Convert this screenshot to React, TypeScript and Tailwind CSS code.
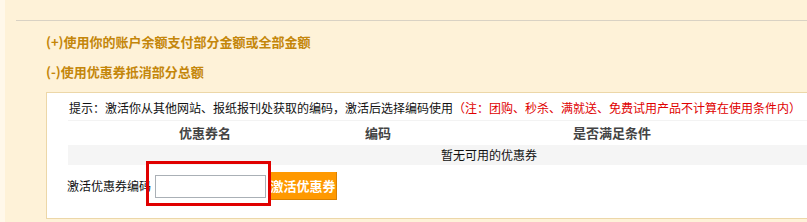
const font = "font-['SimSun','Noto_Sans_CJK_SC',sans-serif]";

const CouponPanel = () => {
  return (
    <div className="relative mt-[11px] ml-[30px] w-[880px] h-[127px] border border-[#ecd7a8] bg-white">
      <p className="absolute left-[22px] top-[7px] text-[12px] leading-[16px] text-[#111] whitespace-nowrap">
        提示：激活你从其他网站、报纸报刊处获取的编码，激活后选择编码使用
        <span className="text-[#e00000]">（注：团购、秒杀、满就送、免费试用产品不计算在使用条件内）</span>
      </p>
      <div className="absolute left-[21px] top-[27px] w-[742px] text-[12px]">
        <div className="flex h-[25px] items-center border-t border-[#f3f3f3] font-bold text-[13px] text-[#444]">
          <div className="w-[274px] text-center">优惠券名</div>
          <div className="w-[72px] text-center">编码</div>
          <div className="w-[396px] text-center">是否满足条件</div>
        </div>
        <div className="flex h-[20px] items-center bg-[#f5f5f5] pl-[373px] text-[#111]">暂无可用的优惠券</div>
      </div>
      <div className="absolute left-[20px] top-[79px] flex items-center text-[12px] text-[#111]">
        <span className="w-[88px] whitespace-nowrap">激活优惠券编码</span>
        <input
          type="text"
          className="w-[111px] h-[23px] border border-[#aab0b6] bg-white outline-none"
        />
        <button className="ml-[4px] h-[28px] w-[67px] bg-[#ff9900] border-r border-b border-[#d98000] text-white font-bold text-[13px] whitespace-nowrap">
          激活优惠券
        </button>
      </div>
      <div className="absolute left-[99px] top-[68px] w-[125px] h-[45px] border-[3px] border-[#e00000]" />
    </div>
  );
};

export default function App() {
  return (
    <div className={`flex w-[807px] h-[222px] overflow-hidden bg-[#fef2d8] ${font}`}>
      <div className="w-[5px] shrink-0 bg-[#fff8ea]" />
      <div className="flex-1 pt-[20px] pl-[11px]">
        <div className="border-t border-[#d9d2c4] w-[900px]" />
        <div className="pl-[30px] pt-[12px] font-bold text-[13px] leading-[18px] text-[#c4860a]">
          <div>(+)使用你的账户余额支付部分金额或全部金额</div>
          <div className="mt-[12px]">(-)使用优惠券抵消部分总额</div>
        </div>
        <CouponPanel />
      </div>
    </div>
  );
}
